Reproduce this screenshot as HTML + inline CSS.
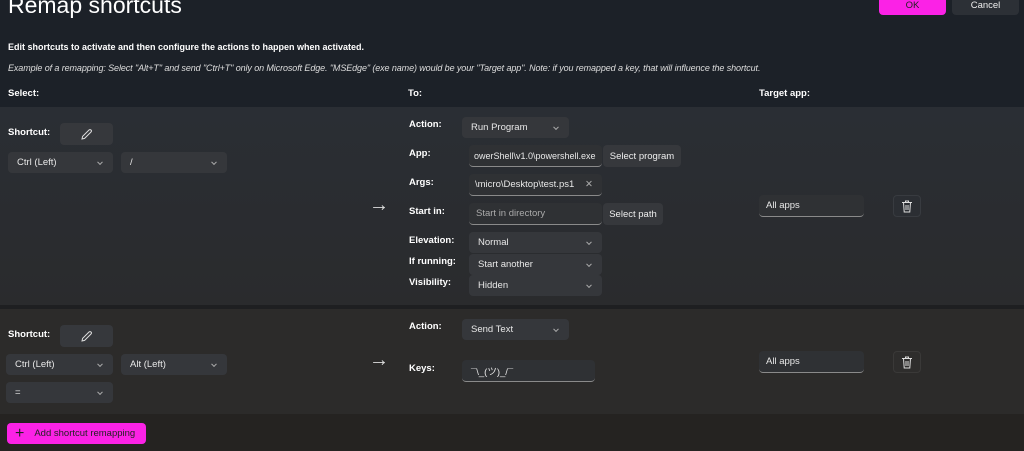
<!DOCTYPE html>
<html><head><meta charset="utf-8"><style>
*{box-sizing:border-box;margin:0;padding:0}
body{width:1024px;height:451px;overflow:hidden;background:#1c2128;font-family:"Liberation Sans","Noto Sans CJK JP",sans-serif;color:#fff;position:relative;font-size:9.5px}
.a{position:absolute}
.b{font-weight:bold}
.ctl{position:absolute;background:#35373b;border-radius:4px;color:#e8e8e8;font-size:9.5px;padding-left:9px;display:flex;align-items:center}
.dd::after{content:"";position:absolute;right:11px;top:50%;width:3px;height:3px;border-right:1px solid #aaa;border-bottom:1px solid #aaa;transform:translateY(-70%) rotate(45deg)}
.tb{border-bottom:1px solid #8a8a8a;background:#2f3134}
.btn{position:absolute;background:#36383c;border-radius:4px;color:#eee;display:flex;align-items:center;justify-content:center;font-size:9.5px}
.arr{position:absolute;font-size:20px;color:#ddd;font-weight:lighter;line-height:1}
</style></head><body>
<div class="a" style="left:8px;top:-8px;font-size:23px;color:#fff">Remap shortcuts</div>
<div class="btn" style="left:879px;top:-4px;width:67px;height:19px;background:#fb22e6;color:#222">OK</div>
<div class="btn" style="left:952px;top:-4px;width:67px;height:19px;background:#2c3036">Cancel</div>
<div class="a b" style="left:8px;top:42px;font-size:9px">Edit shortcuts to activate and then configure the actions to happen when activated.</div>
<div class="a" style="left:8px;top:63px;font-size:9px;font-style:italic;color:#ddd;letter-spacing:-0.1px">Example of a remapping: Select "Alt+T" and send "Ctrl+T" only on Microsoft Edge. "MSEdge" (exe name) would be your "Target app". Note: if you remapped a key, that will influence the shortcut.</div>
<div class="a b" style="left:8px;top:88px">Select:</div>
<div class="a b" style="left:408px;top:88px">To:</div>
<div class="a b" style="left:759px;top:88px">Target app:</div>

<div class="a" style="left:0;top:107px;width:1024px;height:198px;background:linear-gradient(180deg,#2a2e34,#2a2b2d)"></div>
<div class="a" style="left:0;top:305px;width:1024px;height:4px;background:#1e1f21"></div>
<div class="a" style="left:0;top:309px;width:1024px;height:105px;background:#2c2b2a"></div>
<div class="a" style="left:0;top:414px;width:1024px;height:37px;background:#252321"></div>

<!-- row1 -->
<div class="a b" style="left:8px;top:127px">Shortcut:</div>
<div class="btn" style="left:60px;top:123px;width:53px;height:22px"><svg width="13" height="13" viewBox="0 0 13 13"><path d="M2 11l.6-2.6L9 2a1.4 1.4 0 0 1 2 2L4.6 10.4z" fill="none" stroke="#ddd" stroke-width="1"/></svg></div>
<div class="ctl dd" style="left:8px;top:152px;width:105px;height:21px">Ctrl (Left)</div>
<div class="ctl dd" style="left:121px;top:152px;width:106px;height:21px">/</div>
<div class="arr" style="left:369px;top:195px">→</div>
<div class="a b" style="left:409px;top:119px">Action:</div>
<div class="ctl dd" style="left:462px;top:117px;width:107px;height:21px">Run Program</div>
<div class="a b" style="left:409px;top:148px">App:</div>
<div class="ctl tb" style="left:469px;top:145px;width:133px;height:22px;padding-left:5px;overflow:hidden;white-space:nowrap;font-size:9px">owerShell\v1.0\powershell.exe</div>
<div class="btn" style="left:603px;top:145px;width:78px;height:22px">Select program</div>
<div class="a b" style="left:409px;top:177px">Args:</div>
<div class="ctl tb" style="left:469px;top:174px;width:133px;height:22px;padding-left:6px">\micro\Desktop\test.ps1<span style="position:absolute;right:9px;color:#aaa">✕</span></div>
<div class="a b" style="left:409px;top:206px">Start in:</div>
<div class="ctl tb" style="left:469px;top:203px;width:133px;height:22px;padding-left:7px;color:#aaa">Start in directory</div>
<div class="btn" style="left:603px;top:203px;width:60px;height:22px">Select path</div>
<div class="a b" style="left:409px;top:235px">Elevation:</div>
<div class="ctl dd" style="left:469px;top:232px;width:133px;height:21px">Normal</div>
<div class="a b" style="left:409px;top:256px">If running:</div>
<div class="ctl dd" style="left:469px;top:254px;width:133px;height:21px">Start another</div>
<div class="a b" style="left:409px;top:277px">Visibility:</div>
<div class="ctl dd" style="left:469px;top:275px;width:133px;height:21px">Hidden</div>
<div class="ctl tb" style="left:759px;top:195px;width:105px;height:22px;padding-left:7px">All apps</div>
<div class="btn" style="left:893px;top:195px;width:28px;height:22px;background:#2b2e33;border:1px solid #383b40"><svg width="12" height="13" viewBox="0 0 12 13"><path d="M1 2.5h10M4.5 2.5V1h3v1.5M2.5 2.5l.7 9.5h5.6l.7-9.5M5 5v5M7 5v5" fill="none" stroke="#ddd" stroke-width="1"/></svg></div>

<!-- row2 -->
<div class="a b" style="left:8px;top:329px">Shortcut:</div>
<div class="btn" style="left:60px;top:325px;width:53px;height:22px"><svg width="13" height="13" viewBox="0 0 13 13"><path d="M2 11l.6-2.6L9 2a1.4 1.4 0 0 1 2 2L4.6 10.4z" fill="none" stroke="#ddd" stroke-width="1"/></svg></div>
<div class="ctl dd" style="left:6px;top:354px;width:107px;height:21px">Ctrl (Left)</div>
<div class="ctl dd" style="left:121px;top:354px;width:106px;height:21px">Alt (Left)</div>
<div class="ctl dd" style="left:6px;top:382px;width:107px;height:21px">=</div>
<div class="arr" style="left:369px;top:350px">→</div>
<div class="a b" style="left:409px;top:321px">Action:</div>
<div class="ctl dd" style="left:462px;top:319px;width:107px;height:21px">Send Text</div>
<div class="a b" style="left:409px;top:363px">Keys:</div>
<div class="ctl tb" style="left:462px;top:360px;width:133px;height:22px">¯\_(ツ)_/¯</div>
<div class="ctl tb" style="left:759px;top:351px;width:105px;height:22px;padding-left:7px">All apps</div>
<div class="btn" style="left:893px;top:351px;width:28px;height:22px;background:#2e2d2c;border:1px solid #3a3938"><svg width="12" height="13" viewBox="0 0 12 13"><path d="M1 2.5h10M4.5 2.5V1h3v1.5M2.5 2.5l.7 9.5h5.6l.7-9.5M5 5v5M7 5v5" fill="none" stroke="#ddd" stroke-width="1"/></svg></div>

<div class="btn" style="left:7px;top:423px;width:139px;height:21px;background:#fb22e6;color:#222;justify-content:flex-start;padding-left:8px"><span style="font-size:16px;margin-right:10px;line-height:1">+</span>Add shortcut remapping</div>
</body></html>
